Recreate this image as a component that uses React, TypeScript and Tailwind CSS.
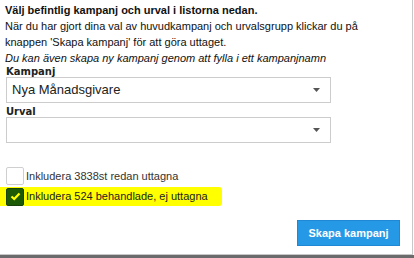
import React from 'react';

const CampaignForm = () => {
  return (
    <div className="w-[414px] h-[258px] bg-white overflow-hidden font-['Liberation_Sans',Arial,sans-serif]">
      <div className="w-[413px] h-[255px] border-r border-b border-[#c8c8c8] flex flex-col">
        <div className="pl-[5px] pt-[2px] text-[11px] leading-[16px] text-[#111]">
          <div className="font-bold">Välj befintlig kampanj och urval i listorna nedan.</div>
          <div>När du har gjort dina val av huvudkampanj och urvalsgrupp klickar du på</div>
          <div>knappen 'Skapa kampanj' för att göra uttaget.</div>
          <div className="italic">Du kan även skapa ny kampanj genom att fylla i ett kampanjnamn</div>
        </div>

        <div className="pl-[6px]">
          <label className="block mt-[1px] h-[10px] text-[10px] leading-[10px] font-bold text-[#222] font-['DejaVu_Sans',Verdana,sans-serif]">
            Kampanj
          </label>
          <div className="w-[325px] h-[26px] border border-[#cccccc] flex items-center justify-between pl-[5px] pr-[10px]">
            <span className="text-[13px] text-[#222]">Nya Månadsgivare</span>
            <svg width="7" height="4" viewBox="0 0 7 4">
              <polygon points="0,0 7,0 3.5,4" fill="#555" />
            </svg>
          </div>

          <label className="block mt-[4px] h-[10px] text-[10px] leading-[10px] font-bold text-[#222] font-['DejaVu_Sans',Verdana,sans-serif]">
            Urval
          </label>
          <div className="w-[325px] h-[26px] border border-[#cccccc] flex items-center justify-end pr-[10px]">
            <svg width="7" height="4" viewBox="0 0 7 4">
              <polygon points="0,0 7,0 3.5,4" fill="#555" />
            </svg>
          </div>

          <div className="mt-[24px] flex items-center gap-[2px] h-[18px]">
            <span className="w-[18px] h-[18px] rounded-[2px] border border-[#cfcfcf] bg-white" />
            <span className="text-[11px] text-[#333]">Inkludera 3838st redan uttagna</span>
          </div>

          <div className="mt-[2px] -ml-[6px] pl-[6px] w-[222px] h-[19px] bg-[#ffff00] rounded-r-[3px] flex items-center gap-[2px]">
            <span className="w-[18px] h-[18px] rounded-[2px] border border-[#16430a] bg-[#1d5a06] flex items-center justify-center">
              <svg width="11" height="9" viewBox="0 0 11 9">
                <polyline points="1.5,4.5 4.2,7 9.5,1.5" fill="none" stroke="#ffff00" strokeWidth="2.2" />
              </svg>
            </span>
            <span className="text-[11px] text-[#222]">Inkludera 524 behandlade, ej uttagna</span>
          </div>
        </div>

        <div className="mt-auto mb-[8px] pr-[12px] flex justify-end">
          <button
            type="button"
            className="w-[103px] h-[26px] bg-[#2699e6] border border-[#1f88d4] text-white text-[11px] font-bold"
          >
            Skapa kampanj
          </button>
        </div>
      </div>
      <div className="h-[3px] bg-[#6b6b6b]" />
    </div>
  );
};

export default function App() {
  return <CampaignForm />;
}
